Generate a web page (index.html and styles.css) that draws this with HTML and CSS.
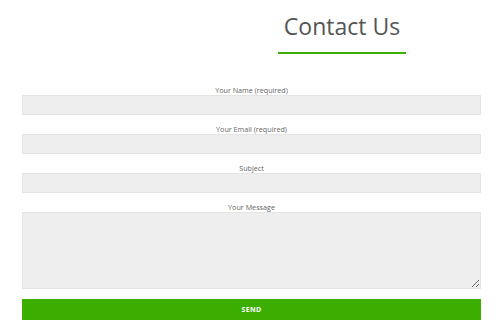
FILE: index.html
```html
<!DOCTYPE html>
<html lang="en">
<head>
    <meta charset="UTF-8">
    <meta name="viewport" content="width=device-width, initial-scale=1.0">
    <title>Contact Us</title>
    <link rel="stylesheet" href="styles.css">
</head>
<body>
    <div class="page-header">
        <h1 class="page-title">Contact Us</h1>
        <div class="title-rule"></div>
    </div>

    <form class="contact-form">
        <label class="field-label" for="yourName">Your Name (required)</label>
        <input class="field-input" type="text" id="yourName">

        <label class="field-label" for="yourEmail">Your Email (required)</label>
        <input class="field-input" type="email" id="yourEmail">

        <label class="field-label" for="subject">Subject</label>
        <input class="field-input" type="text" id="subject">

        <label class="field-label" for="message">Your Message</label>
        <textarea class="field-input field-message" id="message"></textarea>

        <button class="send-button" type="button">SEND</button>
    </form>
</body>
</html>
```

FILE: styles.css
```css
body {
    font-family: "Open Sans", "Liberation Sans", sans-serif;
    background-color: #fff;
    color: #666;
    margin: 0;
    padding: 0;
}
.page-header {
    width: 128px;
    margin-left: 278px;
    padding-top: 8px;
}
.page-title {
    font-size: 23px;
    font-weight: normal;
    color: #555;
    text-align: center;
    line-height: 36px;
    margin: 0;
    white-space: nowrap;
}
.title-rule {
    height: 2px;
    background-color: #3cb000;
    margin-top: 8px;
}
.contact-form {
    display: flex;
    flex-direction: column;
    width: 459px;
    margin-left: 22px;
    margin-top: 31px;
}
.field-label {
    font-size: 7.2px;
    line-height: 10px;
    color: #666;
    text-align: center;
    margin-top: 9px;
}
.field-label:first-child {
    margin-top: 0;
}
.field-input {
    box-sizing: border-box;
    height: 20px;
    background-color: #eee;
    border: 1px solid #e4e4e4;
    margin: 0;
    padding: 2px 4px;
    font-family: inherit;
    font-size: 8px;
    outline: none;
}
.field-message {
    height: 77px;
    resize: vertical;
}
.send-button {
    height: 21px;
    margin-top: 10px;
    background-color: #3cae00;
    color: #fff;
    border: none;
    font-family: inherit;
    font-size: 7px;
    font-weight: bold;
    letter-spacing: 0.3px;
    cursor: pointer;
}
```
